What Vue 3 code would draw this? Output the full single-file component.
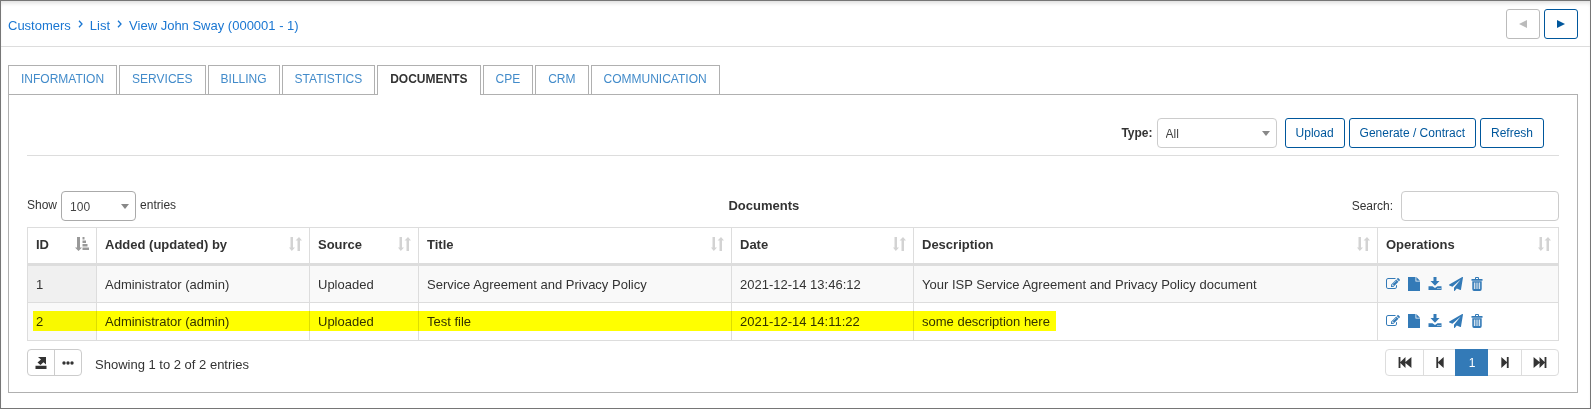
<script setup>
import { ref } from 'vue'

const crumbs = ['Customers', 'List', 'View John Sway (000001 - 1)']
const tabs = ['Information', 'Services', 'Billing', 'Statistics', 'Documents', 'CPE', 'CRM', 'Communication']
const activeTab = ref('Documents')
const type = ref('All')
const pageSize = ref('100')
const search = ref('')

const columns = [
  { key: 'id', label: 'ID' },
  { key: 'by', label: 'Added (updated) by' },
  { key: 'source', label: 'Source' },
  { key: 'title', label: 'Title' },
  { key: 'date', label: 'Date' },
  { key: 'description', label: 'Description' },
  { key: 'operations', label: 'Operations' },
]

const rows = [
  {
    id: 1,
    by: 'Administrator (admin)',
    source: 'Uploaded',
    title: 'Service Agreement and Privacy Policy',
    date: '2021-12-14 13:46:12',
    description: 'Your ISP Service Agreement and Privacy Policy document',
  },
  {
    id: 2,
    by: 'Administrator (admin)',
    source: 'Uploaded',
    title: 'Test file',
    date: '2021-12-14 14:11:22',
    description: 'some description here',
    marked: true,
  },
]

const operations = [
  {
    name: 'Edit',
    box: '0 0 1792 1792',
    path: 'M888 1184l116-116-152-152-116 116v56h96v96h56zm440-720q-16-16-33 1l-350 350q-17 17-1 33t33-1l350-350q17-17 1-33zm80 594v190q0 119-84.5 203.5t-203.5 84.5h-832q-119 0-203.5-84.5t-84.5-203.5v-832q0-119 84.5-203.5t203.5-84.5h832q63 0 117 25 15 7 18 23 3 17-9 29l-49 49q-14 14-32 8-23-6-45-6h-832q-66 0-113 47t-47 113v832q0 66 47 113t113 47h832q66 0 113-47t47-113v-126q0-13 9-22l64-64q15-15 35-7t20 29zm-96-738l288 288-672 672h-288v-288zm444 132l-92 92-288-288 92-92q28-28 68-28t68 28l152 152q28 28 28 68t-28 68z',
  },
  {
    name: 'View',
    box: '0 0 14 14',
    path: 'M1 0h7.500v4.500h4.500v9.500h-12zM9.300 0l3.700 3.700h-3.700z',
  },
  {
    name: 'Download',
    box: '0 0 14 14',
    path: 'M5.500 0h3v4h3L7 8.700 2.500 4h3zM0.500 9.300h4l2.500 1.700 2.500-1.700h4v3.700h-13zM9.500 11v1h1v-1zM11.500 11v1h1v-1z',
  },
  {
    name: 'Send',
    box: '0 0 1792 1792',
    path: 'M1764 11q33 24 27 64l-256 1536q-5 29-32 45-14 8-31 8-11 0-24-5l-453-185-242 295q-18 23-49 23-13 0-22-4-19-7-30.5-23.5t-11.5-36.5v-349l864-1059-1069 925-395-162q-37-14-40-55-2-40 32-59l1664-960q15-9 32-9 20 0 36 11z',
  },
  {
    name: 'Delete',
    box: '0 0 14 14',
    path: 'M5 2V1q0-1 1-1h2q1 0 1 1v1h3.500v1.700h-11V2zM6 1v1h2V1zM2.300 4.300h9.400v7.700q0 2-1.700 2h-6q-1.700 0-1.700-2zM3.900 5.500v6.500h0.900V5.500zM5.700 5.500v6.500h0.800V5.500zM7.500 5.500v6.500h0.800V5.500zM9.200 5.500v6.500h0.900V5.500z',
  },
]
</script>

<template>
  <div class="page">
    <header class="topbar">
      <nav class="crumbs" aria-label="Breadcrumb">
        <template v-for="(crumb, i) in crumbs" :key="crumb">
          <svg v-if="i" class="chevron" viewBox="0 0 5 8" aria-hidden="true"><path d="M1 0.800L4 4 1 7.200" /></svg>
          <a href="#">{{ crumb }}</a>
        </template>
      </nav>
      <div class="pager-top">
        <button type="button" class="btn square" disabled aria-label="Previous customer">
          <svg viewBox="0 0 8 8" aria-hidden="true"><path d="M8 0v8L0 4z" /></svg>
        </button>
        <button type="button" class="btn square" aria-label="Next customer">
          <svg viewBox="0 0 8 8" aria-hidden="true"><path d="M0 0v8l8-4z" /></svg>
        </button>
      </div>
    </header>

    <main>
      <nav class="tabs" aria-label="Customer sections">
        <a
          v-for="tab in tabs"
          :key="tab"
          href="#"
          :class="{ active: tab === activeTab }"
          @click.prevent="activeTab = tab"
        >{{ tab }}</a>
      </nav>

      <section class="panel">
        <div class="toolbar">
          <label for="doc-type">Type:</label>
          <span class="select type">
            <select id="doc-type" v-model="type">
              <option>All</option>
            </select>
            <svg viewBox="0 0 8 5" aria-hidden="true"><path d="M0 0h8L4 5z" /></svg>
          </span>
          <button type="button" class="btn">Upload</button>
          <button type="button" class="btn">Generate / Contract</button>
          <button type="button" class="btn">Refresh</button>
        </div>

        <div class="controls">
          <div class="length">
            <label for="page-size">Show</label>
            <span class="select size">
              <select id="page-size" v-model="pageSize">
                <option>100</option>
              </select>
              <svg viewBox="0 0 8 5" aria-hidden="true"><path d="M0 0h8L4 5z" /></svg>
            </span>
            <span>entries</span>
          </div>
          <h2>Documents</h2>
          <div class="search">
            <label for="doc-search">Search:</label>
            <input id="doc-search" v-model="search" type="text" />
          </div>
        </div>

        <table>
          <colgroup>
            <col v-for="c in columns" :key="c.key" :class="'col-' + c.key" />
          </colgroup>
          <thead>
            <tr>
              <th v-for="(c, i) in columns" :key="c.key" scope="col">
                <div class="head">
                  {{ c.label }}
                  <svg v-if="i === 0" class="sort sorted" viewBox="0 0 14 14" aria-hidden="true">
                    <path d="M2 0h3v10.500h2L3.500 14 0 10.500h2zM7.500 0h2v2.500h-2zM7.500 3.500h3.500v2.500h-3.500zM7.500 7h5v2.500h-5zM7.500 10.500h6.500v2.500h-6.500z" />
                  </svg>
                  <svg v-else class="sort" viewBox="0 0 14 14" aria-hidden="true">
                    <path d="M2.500 0h2.500v10.500h2L3.800 14 1 10.500h1.500zM9.500 14H12V3.500h2L11 0 7.500 3.500h2z" />
                  </svg>
                </div>
              </th>
            </tr>
          </thead>
          <tbody>
            <tr v-for="row in rows" :key="row.id">
              <td>{{ row.id }}<span v-if="row.marked" class="marker"></span></td>
              <td>{{ row.by }}</td>
              <td>{{ row.source }}</td>
              <td>{{ row.title }}</td>
              <td>{{ row.date }}</td>
              <td>{{ row.description }}</td>
              <td>
                <div class="ops">
                  <a v-for="op in operations" :key="op.name" href="#" :aria-label="op.name">
                    <svg :viewBox="op.box" aria-hidden="true"><path fill-rule="evenodd" :d="op.path" /></svg>
                  </a>
                </div>
              </td>
            </tr>
          </tbody>
        </table>

        <footer class="footer">
          <div class="group">
            <button type="button" class="narrow" aria-label="Export">
              <svg class="export" viewBox="0 0 12 12" aria-hidden="true">
                <path d="M3 0h8v7.500L8.500 5.300 5.500 8 2.500 5.500 6 2.500zM0.500 8.800h11v3.200h-11z" />
              </svg>
            </button>
            <button type="button" aria-label="More">
              <svg class="dots" viewBox="0 0 12 4" aria-hidden="true">
                <circle cx="2" cy="2" r="1.700" /><circle cx="6" cy="2" r="1.700" /><circle cx="10" cy="2" r="1.700" />
              </svg>
            </button>
          </div>
          <p>Showing 1 to 2 of 2 entries</p>
          <nav class="group pages" aria-label="Pages">
            <button type="button" class="wide" aria-label="First">
              <svg viewBox="0 0 14 12" aria-hidden="true"><path d="M0 0h2v5.500L7.500 0v5.500L14 0v12L7.500 6.500V12L2 6.500V12H0z" /></svg>
            </button>
            <button type="button" aria-label="Previous">
              <svg class="step" viewBox="0 0 8 12" aria-hidden="true"><path d="M0 0h2v5.500L8 0v12L2 6.500V12H0z" /></svg>
            </button>
            <button type="button" class="current" aria-current="page">1</button>
            <button type="button" aria-label="Next">
              <svg class="step" viewBox="0 0 8 12" aria-hidden="true"><path d="M8 0H6v5.500L0 0v12l6-5.500V12h2z" /></svg>
            </button>
            <button type="button" class="wide" aria-label="Last">
              <svg viewBox="0 0 14 12" aria-hidden="true"><path d="M14 0h-2v5.500L6.500 0v5.500L0 0v12l6.500-5.500V12L12 6.500V12h2z" /></svg>
            </button>
          </nav>
        </footer>
      </section>
    </main>
  </div>
</template>

<style>
body {
  margin: 0;
  background: #fff;
}
</style>

<style scoped>
.page {
  box-sizing: border-box;
  min-height: 100vh;
  border: 1px solid #767676;
  box-shadow: inset 0 4px 4px -2px #ddd;
  color: #333;
  font: 13px/18px "Liberation Sans", Arial, sans-serif;
}
a {
  text-decoration: none;
}
svg {
  display: block;
  fill: currentColor;
}
button,
input,
select {
  box-sizing: border-box;
  margin: 0;
  font: inherit;
}
.topbar {
  display: flex;
  align-items: center;
  justify-content: space-between;
  height: 45px;
  padding: 0 12px 0 7px;
  border-bottom: 1px solid #ddd;
}
.crumbs {
  display: flex;
  align-items: center;
  gap: 7px;
  padding-top: 4px;
  color: #1976d2;
}
.crumbs a {
  color: inherit;
}
.chevron {
  width: 5px;
  height: 8px;
  margin-bottom: 3px;
  fill: none;
  stroke: currentColor;
  stroke-width: 1.3;
}
.pager-top {
  display: flex;
  gap: 4px;
}
.btn {
  height: 30px;
  padding: 0 10px;
  border: 1px solid #00579c;
  border-radius: 3px;
  background: #fff;
  color: #00579c;
  font-size: 12px;
}
.btn.square {
  width: 34px;
  display: flex;
  align-items: center;
  justify-content: center;
}
.btn.square svg {
  width: 8px;
  height: 8px;
}
.btn:disabled {
  border-color: #bbb;
  color: #bbb;
}
main {
  padding: 18px 12px 15px 7px;
}
.tabs {
  display: flex;
  gap: 2px;
}
.tabs a {
  height: 28px;
  padding: 0 12px;
  border: 1px solid #b0b0b0;
  border-bottom: 0;
  color: #428bca;
  font-size: 12px;
  line-height: 26px;
  text-transform: uppercase;
}
.tabs a.active {
  position: relative;
  height: 29px;
  margin-bottom: -1px;
  background: #fff;
  color: #333;
  font-weight: bold;
}
.panel {
  padding: 23px 18px 16px;
  border: 1px solid #b0b0b0;
}
.toolbar {
  display: flex;
  align-items: center;
  justify-content: flex-end;
  gap: 4px;
  margin-bottom: 35px;
  padding: 0 15px 7px 0;
  border-bottom: 1px solid #ddd;
  font-size: 12px;
}
.toolbar label {
  font-weight: bold;
}
.select {
  position: relative;
  display: block;
}
.select select {
  display: block;
  width: 100%;
  height: 30px;
  padding: 2px 24px 0 8px;
  border: 1px solid #ccc;
  border-radius: 4px;
  appearance: none;
  background: #fff;
  color: #444;
}
.select svg {
  position: absolute;
  top: 13px;
  right: 7px;
  width: 8px;
  height: 5px;
  fill: #888;
  pointer-events: none;
}
.type {
  width: 120px;
  margin-right: 4px;
}
.size {
  width: 75px;
}
.size select {
  border-color: #aaa;
}
.controls {
  display: flex;
  align-items: center;
  justify-content: space-between;
  margin-bottom: 6px;
  font-size: 12px;
}
.length {
  display: flex;
  align-items: center;
  gap: 4px;
}
.length > label,
.length > span:last-child {
  padding-bottom: 2px;
}
.search {
  display: flex;
  align-items: center;
  gap: 8px;
}
.search input {
  width: 158px;
  height: 30px;
  padding: 0 8px;
  border: 1px solid #ccc;
  border-radius: 4px;
}
h2 {
  margin: 0;
  font-size: 13px;
}
table {
  position: relative;
  width: 100%;
  table-layout: fixed;
  border: solid #ddd;
  border-width: 1px 0 0 1px;
  border-spacing: 0;
}
.col-id { width: 69px; }
.col-by { width: 213px; }
.col-source { width: 109px; }
.col-title { width: 313px; }
.col-date { width: 182px; }
.col-operations { width: 181px; }
th,
td {
  box-sizing: border-box;
  border: solid #ddd;
  border-width: 0 1px 1px 0;
  text-align: left;
  white-space: nowrap;
}
th {
  height: 38px;
  padding: 0 7px 2px 8px;
  border-bottom-width: 3px;
}
td {
  height: 37px;
  padding: 10px 8px 0;
  vertical-align: top;
}
tbody tr:last-child td {
  height: 38px;
}
tbody tr:first-child td {
  background: #f9f9f9;
}
tbody tr:first-child td:first-child {
  background: #f0f0f0;
}
tbody tr:last-child td:first-child {
  background: #f9f9f9;
}
.head {
  display: flex;
  align-items: center;
  justify-content: space-between;
}
.sort {
  width: 14px;
  height: 14px;
  margin-bottom: 2px;
  color: #d3d3d3;
}
.sorted {
  color: #999;
}
.marker {
  position: absolute;
  bottom: 10px;
  left: 5px;
  width: 66.8%;
  height: 20px;
  background: #ff0;
  mix-blend-mode: multiply;
  pointer-events: none;
}
.ops {
  display: flex;
  align-items: center;
  gap: 7px;
  height: 16px;
  color: #337ab7;
}
.ops a {
  color: inherit;
}
.ops svg {
  width: 14px;
  height: 14px;
}
.footer {
  display: flex;
  align-items: center;
  gap: 13px;
  margin-top: 8px;
}
.footer p {
  margin: 0;
  padding-top: 5px;
}
.group {
  display: flex;
  border: 1px solid #ccc;
  border-radius: 4px;
}
.group button {
  display: flex;
  align-items: center;
  justify-content: center;
  width: 27px;
  height: 25px;
  padding: 0;
  border: 0;
  background: none;
  color: #333;
  font-size: 12px;
}
.group .narrow {
  width: 26px;
}
.group button + button {
  border-left: 1px solid #ccc;
}
.export {
  width: 12px;
  height: 12px;
}
.dots {
  width: 12px;
  height: 4px;
}
.pages {
  margin-left: auto;
  border-color: #ddd;
}
.pages button {
  width: 32px;
}
.pages .wide {
  width: 37px;
}
.pages button + button {
  border-color: #ddd;
}
.pages .wide svg {
  width: 14px;
  height: 11px;
}
.pages .step {
  width: 8px;
  height: 11px;
}
.pages .current {
  width: 33px;
  height: 27px;
  margin: -1px 0;
  background: #337ab7;
  color: #fff;
}
.pages button + .current {
  border-color: #337ab7;
}
.pages .current + button {
  width: 33px;
  border-left: 0;
}
</style>
